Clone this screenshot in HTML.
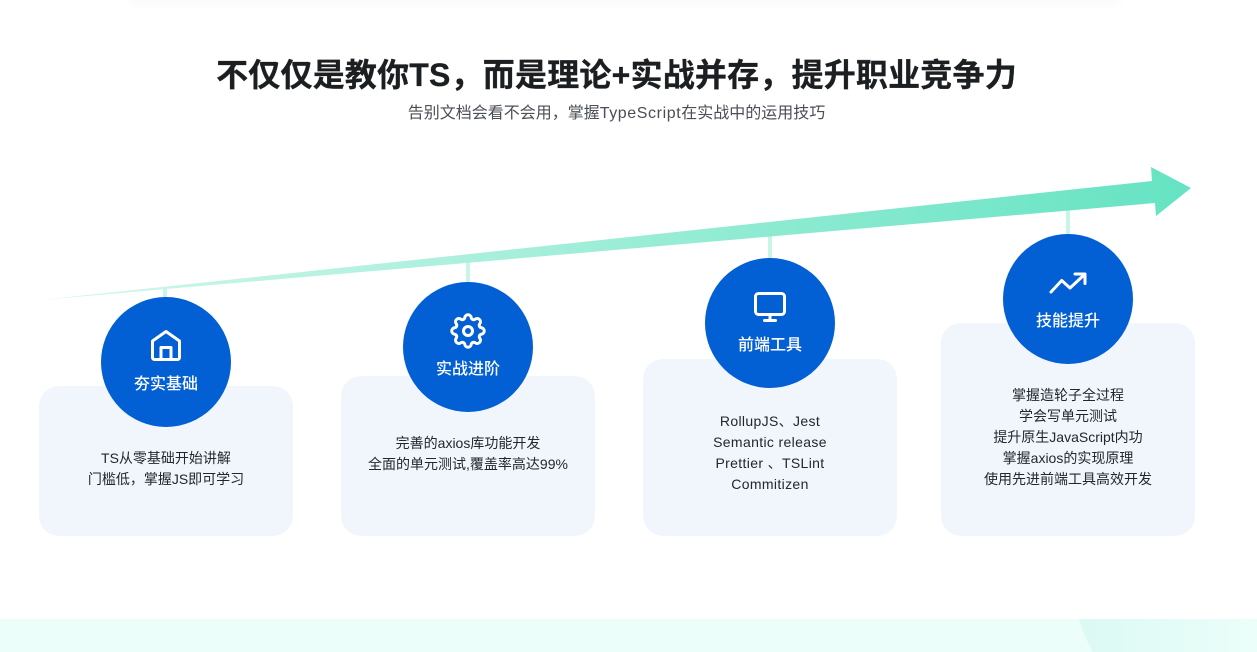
<!DOCTYPE html>
<html lang="zh"><head><meta charset="utf-8"><title>TS</title>
<style>
html,body{margin:0;padding:0;background:#fff;width:1257px;height:652px;overflow:hidden}
body{position:relative;font-family:"Liberation Sans","Noto Sans CJK SC",sans-serif;color:#1c1f21}
.a{position:absolute}
h1{position:absolute;left:0;width:1233px;top:53px;margin:0;text-align:center;font-size:32px;line-height:44px;font-weight:700;color:#1c1f21;letter-spacing:.2px;-webkit-text-stroke:.3px #1c1f21}
.sub{position:absolute;left:0;width:1233px;top:102px;text-align:center;font-size:16px;line-height:24px;color:#4a4f55}
.sub b{font-weight:400;letter-spacing:.6px}
.card{position:absolute;width:254px;background:#f1f6fd;border-radius:20px}
.txt{position:absolute;width:254px;text-align:center;font-size:14px;line-height:21px;color:#23272b}
.c{position:absolute;width:130px;height:130px;border-radius:50%;background:#025fd4}
.c span{position:absolute;left:0;width:130px;top:76px;text-align:center;color:#fff;font-size:16px;line-height:24px;font-weight:500}
.c svg{position:absolute;left:0;top:0;fill:none;stroke:#fff;stroke-width:3;stroke-linecap:round;stroke-linejoin:round}
.l{position:absolute;width:4px;background:#c9f5e8}
</style></head><body>
<div class="a" style="left:100px;top:0;width:1050px;height:14px;overflow:hidden"><div class="a" style="left:30px;top:-20px;width:990px;height:20px;box-shadow:0 2px 14px rgba(0,0,0,.03)"></div></div>
<h1>不仅仅是教你TS，而是理论+实战并存，提升职业竞争力</h1>
<div class="sub">告别文档会看不会用，掌握<b>TypeScript</b>在实战中的运用技巧</div>

<div class="l" style="left:163px;top:288px;height:12px"></div>
<div class="l" style="left:466px;top:262px;height:22px"></div>
<div class="l" style="left:768px;top:234px;height:26px"></div>
<div class="l" style="left:1066px;top:208px;height:28px"></div>

<svg class="a" style="left:0;top:0" width="1257" height="320">
<defs><linearGradient id="g" gradientUnits="userSpaceOnUse" x1="40" y1="0" x2="1191" y2="0"><stop offset="0" stop-color="#d3f7ec"/><stop offset="1" stop-color="#65e3c2"/></linearGradient></defs>
<polygon fill="url(#g)" points="40,300 1152,181 1151,167 1191,188 1156,216 1155,203"/>
</svg>

<div class="card" style="left:39px;top:386px;height:150px"></div>
<div class="card" style="left:341px;top:376px;height:160px"></div>
<div class="card" style="left:643px;top:359px;height:177px"></div>
<div class="card" style="left:941px;top:323px;height:213px"></div>

<div class="c" style="left:101px;top:297px"><span>夯实基础</span>
<svg width="130" height="130" viewBox="0 0 130 130"><path d="M51.500 44 65 34.500 78.500 44V60.500a2 2 0 0 1-2 2H53.500a2 2 0 0 1-2-2ZM60 62.500V50.500h10v12"/></svg></div>
<div class="c" style="left:403px;top:282px"><span>实战进阶</span>
<svg width="130" height="130" viewBox="0 0 130 130"><circle cx="65" cy="49" r="4.500"/><path transform="translate(65 49)" d="M13.420-3.220A3.250 3.250 0 0 1 13.420 3.220A2.500 2.500 0 0 0 11.770 7.210A3.250 3.250 0 0 1 7.210 11.770A2.500 2.500 0 0 0 3.220 13.420A3.250 3.250 0 0 1-3.220 13.420A2.500 2.500 0 0 0-7.210 11.770A3.250 3.250 0 0 1-11.770 7.210A2.500 2.500 0 0 0-13.420 3.220A3.250 3.250 0 0 1-13.420-3.220A2.500 2.500 0 0 0-11.770-7.210A3.250 3.250 0 0 1-7.210-11.770A2.500 2.500 0 0 0-3.220-13.420A3.250 3.250 0 0 1 3.220-13.420A2.500 2.500 0 0 0 7.210-11.770A3.250 3.250 0 0 1 11.770-7.210A2.500 2.500 0 0 0 13.420-3.220Z"/></svg></div>
<div class="c" style="left:705px;top:258px"><span>前端工具</span>
<svg width="130" height="130" viewBox="0 0 130 130"><rect x="50.500" y="35.500" width="29" height="21" rx="3"/><path d="M65 57v5M59.500 62.500h11"/></svg></div>
<div class="c" style="left:1003px;top:234px"><span>技能提升</span>
<svg width="130" height="130" viewBox="0 0 130 130"><path d="M48 58 58.700 46.500 67 54 81 41M72 40H82V49.500"/></svg></div>

<div class="txt" style="left:39px;top:448px">TS从零基础开始讲解<br>门槛低，掌握JS即可学习</div>
<div class="txt" style="left:341px;top:433px">完善的axios库功能开发<br>全面的单元测试,覆盖率高达99%</div>
<div class="txt" style="left:643px;top:411px;letter-spacing:.35px">RollupJS、Jest<br>Semantic release<br>Prettier 、TSLint<br>Commitizen</div>
<div class="txt" style="left:941px;top:385px">掌握造轮子全过程<br>学会写单元测试<br>提升原生JavaScript内功<br>掌握axios的实现原理<br>使用先进前端工具高效开发</div>

<svg class="a" style="left:0;top:619px" width="1257" height="33" viewBox="0 619 1257 33">
<defs><linearGradient id="b" gradientUnits="userSpaceOnUse" x1="1085" y1="0" x2="1257" y2="0"><stop offset="0" stop-color="#dcf9f3"/><stop offset="1" stop-color="#ebfefa"/></linearGradient></defs>
<rect x="0" y="619" width="1257" height="33" fill="#ebfefa"/>
<path fill="url(#b)" d="M1079 619Q1084 637 1093 652H1257V619Z"/>
</svg>
</body></html>
